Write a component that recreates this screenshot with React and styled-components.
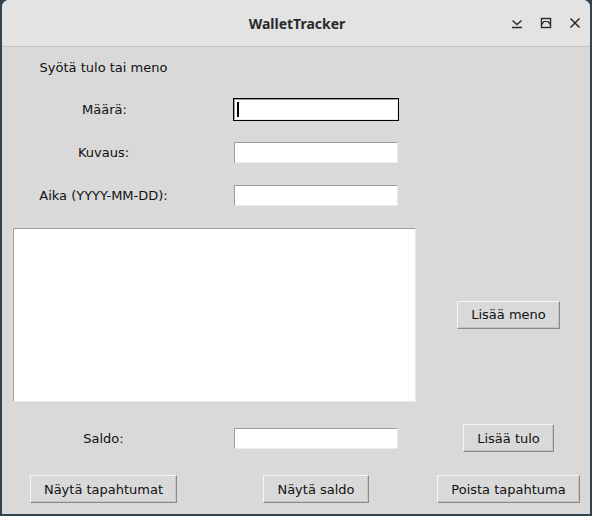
import styled, { createGlobalStyle } from "styled-components";

const Global = createGlobalStyle`
  html, body {
    margin: 0;
    padding: 0;
    background: #33444e;
    width: 592px;
    height: 516px;
    overflow: hidden;
  }
`;

function App() {
  return (
    <>
      <Global />
      <Win>
        <TitleBar>
          <Title>WalletTracker</Title>
          <Controls>
            <Ctl>
              <svg width="12" height="12" viewBox="0 0 12 12">
                <path d="M1.5 3.5 L6 7.5 L10.5 3.5 M1 10.5 H11" stroke="#2b2b2b" strokeWidth="1.4" fill="none" />
              </svg>
            </Ctl>
            <Ctl>
              <svg width="12" height="12" viewBox="0 0 12 12">
                <rect x="1.5" y="1.5" width="9" height="9" stroke="#2b2b2b" strokeWidth="1.4" fill="none" />
                <path d="M1.5 7.5 L4 4.5 H8 L10.5 7.5" stroke="#2b2b2b" strokeWidth="1.2" fill="none" />
              </svg>
            </Ctl>
            <Ctl>
              <svg width="12" height="12" viewBox="0 0 12 12">
                <path d="M1.5 1.5 L10.5 10.5 M10.5 1.5 L1.5 10.5" stroke="#2b2b2b" strokeWidth="1.5" fill="none" />
              </svg>
            </Ctl>
          </Controls>
        </TitleBar>

        <Body>
          <Label>Syötä tulo tai meno</Label>
          <span />
          <span />

          <Label $indent={2}>Määrä:</Label>
          <Entry $focused>
            <Caret />
          </Entry>
          <span />

          <Label>Kuvaus:</Label>
          <Entry />
          <span />

          <Label>Aika (YYYY-MM-DD):</Label>
          <Entry />
          <span />

          <ListBox />
          <Button>Lisää meno</Button>

          <Label>Saldo:</Label>
          <Entry />
          <Button>Lisää tulo</Button>

          <Button>Näytä tapahtumat</Button>
          <Button>Näytä saldo</Button>
          <Button>Poista tapahtuma</Button>
        </Body>
      </Win>
    </>
  );
}
export default App;

/* styled-components */

const Win = styled.div`
  margin-left: 2px;
  width: 588px;
  height: 514px;
  background: #d9d9d9;
  border-radius: 7px 7px 0 0;
  overflow: hidden;
  display: flex;
  flex-direction: column;
  font-family: "DejaVu Sans", sans-serif;
  color: #111;
`;

const TitleBar = styled.div`
  height: 46px;
  flex: none;
  background: #e3e3e4;
  border-bottom: 1px solid #c4c4c4;
  display: flex;
  align-items: center;
  justify-content: center;
  position: relative;
`;

const Title = styled.div`
  font-family: "Noto Sans", sans-serif;
  font-weight: 700;
  font-size: 14px;
  color: #2a2a2a;
  margin-left: 2px;
`;

const Controls = styled.div`
  position: absolute;
  right: 9px;
  top: 0;
  height: 46px;
  display: flex;
  align-items: center;
  gap: 16px;
`;

const Ctl = styled.div`
  width: 13px;
  height: 13px;
  display: flex;
  align-items: center;
  justify-content: center;
`;

const Body = styled.div`
  flex: 1;
  display: grid;
  grid-template-columns: 203px 222px 163px;
  grid-template-rows: 41px 43px 43px 43px 195px 52px 50px;
  align-items: center;
  justify-items: center;
  font-size: 13px;
`;

const Label = styled.div`
  padding-left: ${(p) => p.$indent || 0}px;
  line-height: 19px;
  white-space: nowrap;
`;

const Entry = styled.div`
  width: 164px;
  height: 21px;
  box-sizing: border-box;
  background: #fff;
  border: 1px solid;
  border-color: #9c9c9c #ececec #ececec #9c9c9c;
  outline: 1px solid ${(p) => (p.$focused ? "#000" : "#d9d9d9")};
  display: flex;
  align-items: center;
  padding-left: 2px;
`;

const Caret = styled.span`
  width: 2px;
  height: 15px;
  background: #000;
`;

const ListBox = styled.div`
  grid-column: 1 / span 2;
  justify-self: start;
  margin-left: 11px;
  width: 403px;
  height: 174px;
  box-sizing: border-box;
  background: #fff;
  border: 1px solid;
  border-color: #a0a0a0 #e8e8e8 #e8e8e8 #a0a0a0;
`;

const Button = styled.button`
  font-family: "DejaVu Sans", sans-serif;
  font-size: 13px;
  color: #111;
  height: 28px;
  padding: 0 13px;
  background: #d9d9d9;
  border: 1px solid;
  border-color: #f6f6f6 #8a8a8a #8a8a8a #f6f6f6;
  box-shadow: inset -1px -1px 0 #c4c4c4;
  white-space: nowrap;
`;
